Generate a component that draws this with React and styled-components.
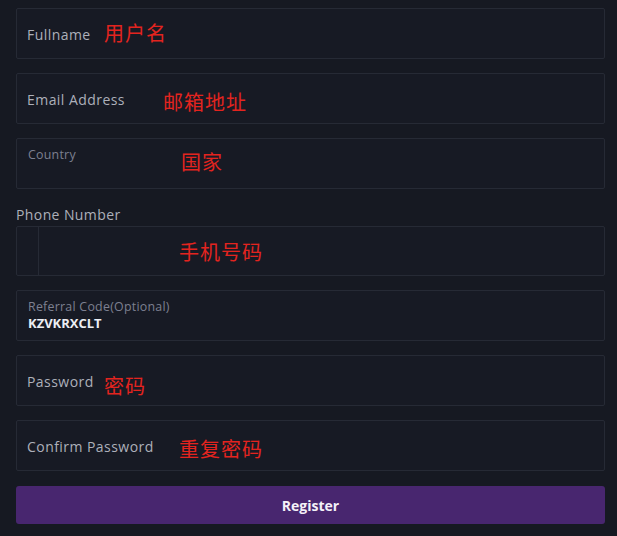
import React from 'react'
import styled, { createGlobalStyle } from 'styled-components'

const Global = createGlobalStyle`
  html, body {
    margin: 0;
    background: #161922;
  }
  body {
    font-family: "Open Sans", "Liberation Sans", sans-serif;
  }
`

const Page = styled.div`
  width: 617px;
  height: 536px;
  box-sizing: border-box;
  padding: 8px 12px 0 16px;
  background: #161922;
`

const Form = styled.form`
  display: flex;
  flex-direction: column;
  gap: 14px;
`

const Field = styled.div`
  position: relative;
  height: 51px;
  box-sizing: border-box;
  border: 1px solid #262a35;
  border-radius: 2px;
  background: #171a24;
  display: flex;
  flex-direction: column;
  justify-content: ${p => (p.$top ? 'flex-start' : 'center')};
  padding: ${p => (p.$top ? '7px 11px 0' : '0 10px')};
`

const Label = styled.span`
  color: #adb0ba;
  font-size: 14px;
  letter-spacing: 0.45px;
  line-height: 18px;
  position: relative;
  top: ${p => p.$shift ?? 1}px;
`

const SmallLabel = styled.span`
  color: #7d8090;
  font-size: 12.4px;
  letter-spacing: 0.25px;
  line-height: 17px;
`

const Value = styled.span`
  color: #eceef3;
  font-size: 13px;
  font-weight: 700;
  line-height: 17px;
`

const Group = styled.div`
  display: flex;
  flex-direction: column;
  gap: 2px;
  margin-top: 3px;
`

const OuterLabel = styled.span`
  color: #adb0ba;
  font-size: 14px;
  letter-spacing: 0.4px;
  line-height: 18px;
`

const PhoneField = styled(Field)`
  height: 50px;
  flex-direction: row;
  justify-content: flex-start;
  padding: 0;
`

const CodeBox = styled.div`
  width: 21px;
  height: 100%;
  border-right: 1px solid #262a35;
`

const Note = styled.span`
  position: absolute;
  left: ${p => p.$x}px;
  top: ${p => p.$y}px;
  color: #e3241f;
  font-family: "Noto Sans CJK SC", sans-serif;
  font-size: 20px;
  line-height: 24px;
  letter-spacing: 1px;
`

const Button = styled.button`
  margin-top: 1px;
  height: 38px;
  border: none;
  border-radius: 3px;
  background: #48266f;
  color: #f4f1f8;
  font-family: "Open Sans", "Liberation Sans", sans-serif;
  font-size: 14px;
  font-weight: 700;
`

export default function App() {
  return (
    <Page>
      <Global />
      <Form onSubmit={e => e.preventDefault()}>
        <Field>
          <Label>Fullname</Label>
          <Note $x={87} $y={12}>用户名</Note>
        </Field>
        <Field>
          <Label>Email Address</Label>
          <Note $x={146} $y={16}>邮箱地址</Note>
        </Field>
        <Field $top>
          <SmallLabel>Country</SmallLabel>
          <Note $x={164} $y={11}>国家</Note>
        </Field>
        <Group>
          <OuterLabel>Phone Number</OuterLabel>
          <PhoneField>
            <CodeBox />
            <Note $x={162} $y={13}>手机号码</Note>
          </PhoneField>
        </Group>
        <Field $top>
          <SmallLabel>Referral Code(Optional)</SmallLabel>
          <Value>KZVKRXCLT</Value>
        </Field>
        <Field>
          <Label>Password</Label>
          <Note $x={87} $y={18}>密码</Note>
        </Field>
        <Field>
          <Label>Confirm Password</Label>
          <Note $x={162} $y={16}>重复密码</Note>
        </Field>
        <Button type="submit">Register</Button>
      </Form>
    </Page>
  )
}
